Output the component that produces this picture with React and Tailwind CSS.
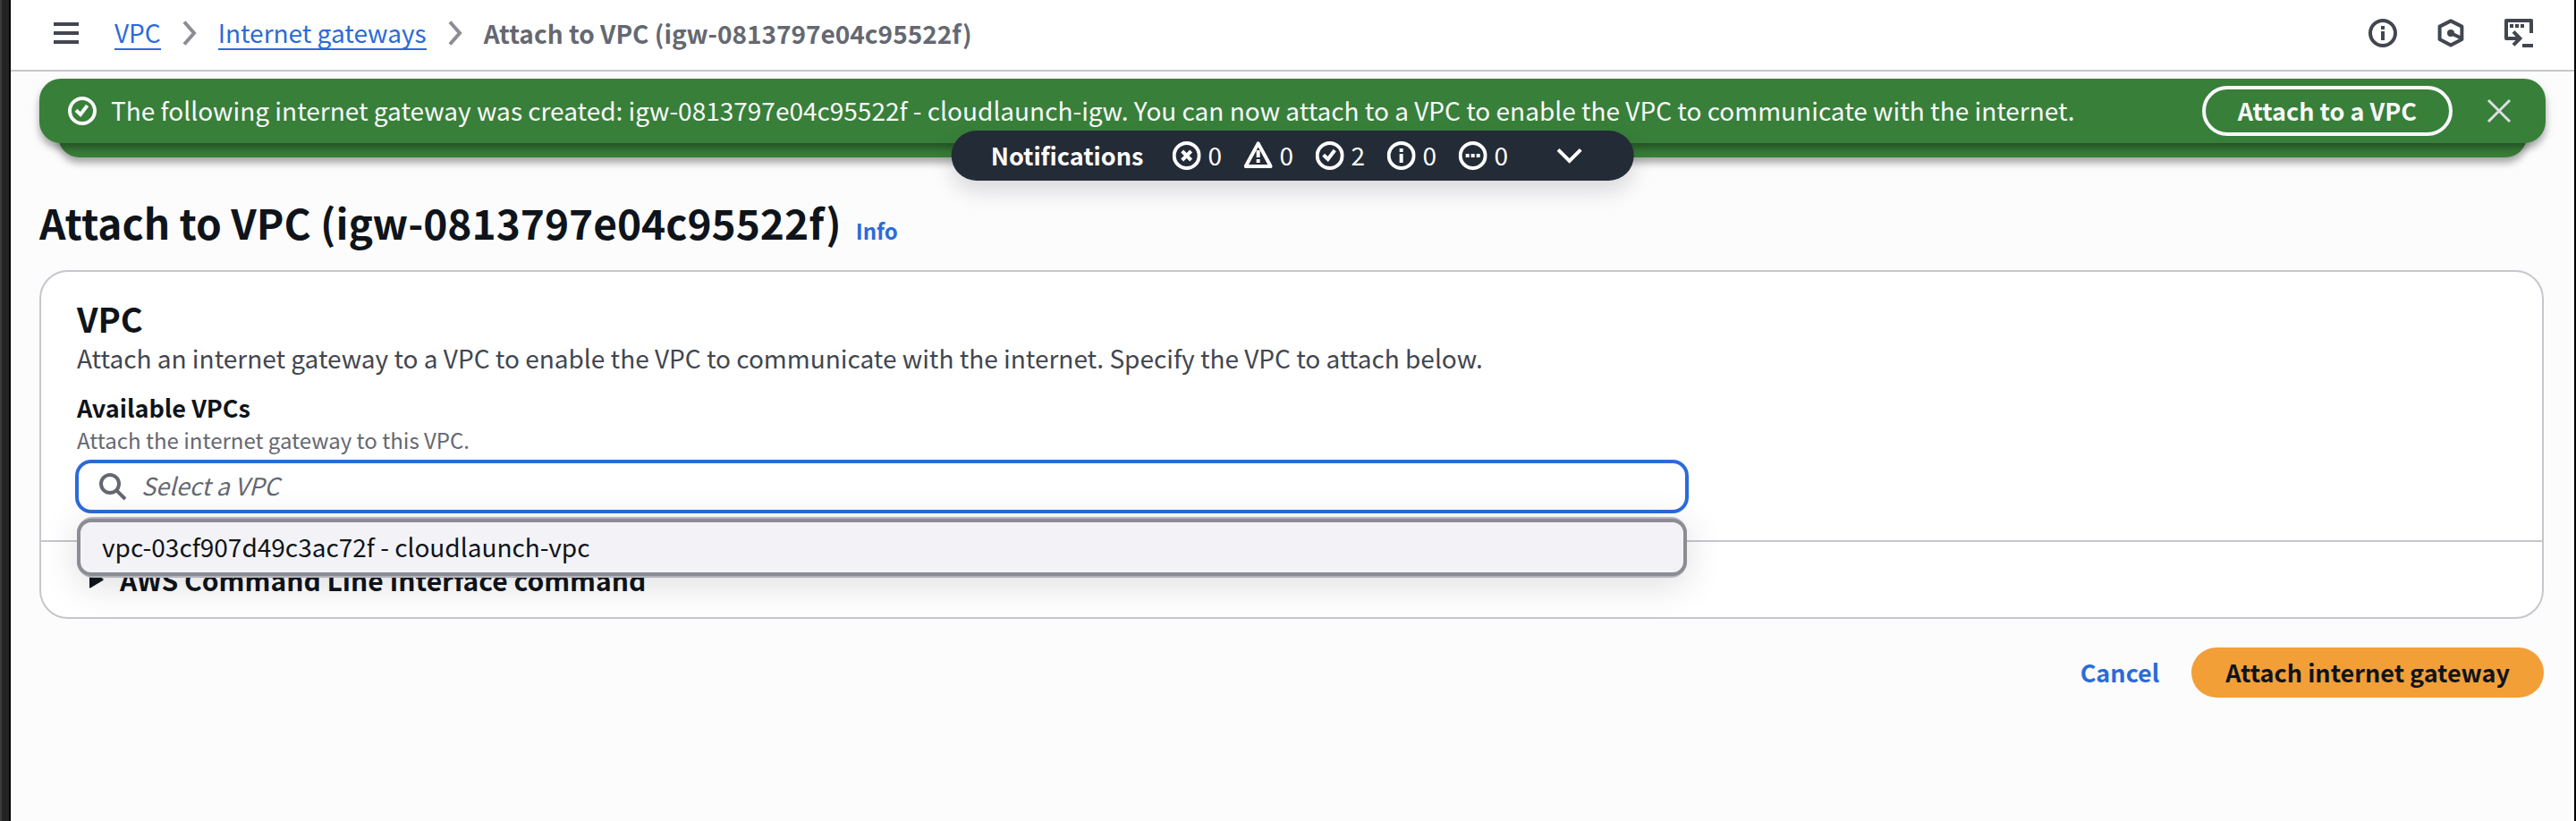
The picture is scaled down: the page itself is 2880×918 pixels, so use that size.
function Icon({ children, className = "size-8", strokeWidth = 2 }) {
  return (
    <svg
      viewBox="0 0 16 16"
      fill="none"
      stroke="currentColor"
      strokeWidth={strokeWidth}
      className={className + " shrink-0"}
      aria-hidden="true"
    >
      {children}
    </svg>
  );
}

function SuccessIcon() {
  return (
    <Icon>
      <circle cx="8" cy="8" r="7" />
      <path d="M4.5 7.6 7 10 10.800 5" />
    </Icon>
  );
}

function ErrorIcon() {
  return (
    <Icon>
      <circle cx="8" cy="8" r="7" />
      <path d="m5.500 5.500 5 5M10.500 5.500l-5 5" />
    </Icon>
  );
}

function WarningIcon() {
  return (
    <Icon>
      <path d="M8 1.2 15 14H1L8 1.2Z" strokeLinejoin="round" />
      <path d="M8 5v4M8 10v2" />
    </Icon>
  );
}

function InfoIcon() {
  return (
    <Icon>
      <circle cx="8" cy="8" r="7" />
      <path d="M8 7v5M8 4v2" />
    </Icon>
  );
}

function InProgressIcon() {
  return (
    <Icon>
      <circle cx="8" cy="8" r="7" />
      <path d="M4 8h2M7 8h2M10 8h2" />
    </Icon>
  );
}

function HexagonIcon() {
  return (
    <Icon>
      <path d="M8 1.2 14.2 4.3v7.2L8 14.8l-6.200-3.300V4.300L8 1.200Z" strokeLinejoin="round" />
      <circle cx="8" cy="8" r="2" fill="currentColor" stroke="none" />
      <path d="m8 8 6 2.900" />
    </Icon>
  );
}

function CloudShellIcon() {
  return (
    <Icon>
      <path d="M15 8V1H1v10h7.500" strokeLinejoin="round" />
      <path d="m5 7.200 3.700 3.800L5 14.700" />
      <path d="M3 4h2M6 4h2M9 4h2M10 15h6" />
    </Icon>
  );
}

function Separator() {
  return (
    <svg viewBox="0 0 16 28" fill="none" stroke="#8c8c94" strokeWidth="4" className="h-7 w-4 shrink-0" aria-hidden="true">
      <path d="M2 1.500 13 14 2 26.500" />
    </svg>
  );
}

const counts = [
  { label: "Errors", icon: ErrorIcon, value: 0 },
  { label: "Warnings", icon: WarningIcon, value: 0 },
  { label: "Successes", icon: SuccessIcon, value: 2 },
  { label: "Information", icon: InfoIcon, value: 0 },
  { label: "In progress", icon: InProgressIcon, value: 0 },
];

const tools = [
  { label: "Info panel", icon: InfoIcon },
  { label: "Diagnostics", icon: HexagonIcon },
  { label: "CloudShell", icon: CloudShellIcon },
];

function Header() {
  return (
    <header className="flex h-20 items-center border-b-2 border-[#c6c6cd] bg-white pb-1 pl-12 pr-[46px] text-[#424650]">
      <button type="button" aria-label="Open navigation" className="mr-10">
        <svg viewBox="0 0 28 24" fill="currentColor" className="h-6 w-7" aria-hidden="true">
          <path d="M0 0h28v4H0zM0 10h28v4H0zM0 20h28v4H0z" />
        </svg>
      </button>
      <nav aria-label="Breadcrumbs" className="flex items-center gap-6">
        <a href="#vpc" className="border-b-2 border-[#2b6bd9] leading-9 text-[#2b6bd9]">VPC</a>
        <Separator />
        <a href="#gateways" className="border-b-2 border-[#2b6bd9] leading-9 text-[#2b6bd9]">Internet gateways</a>
        <Separator />
        <span className="font-bold leading-9 text-[#656871]">Attach to VPC (igw-0813797e04c95522f)</span>
      </nav>
      <div className="ml-auto flex items-center gap-11">
        {tools.map(({ label, icon: Glyph }) => (
          <button key={label} type="button" aria-label={label}>
            <Glyph />
          </button>
        ))}
      </div>
    </header>
  );
}

function Notifications() {
  return (
    <section aria-label="Notifications" className="px-8 pt-2">
      <div className="relative">
        <div className="absolute inset-x-[21px] -bottom-4 top-4 rounded-3xl bg-[#387f39] shadow-[0_6px_8px_rgba(0,0,0,0.35)]" />
        <div className="relative flex h-[72px] items-center rounded-3xl bg-[#387f39] pl-8 pr-9 text-[#f9f9fb] shadow-[0_6px_8px_rgba(0,0,0,0.35)]">
          <SuccessIcon />
          <p className="flex-1 whitespace-nowrap pb-0.5 pl-4">
            The following internet gateway was created: igw-0813797e04c95522f - cloudlaunch-igw. You can now attach to a
            VPC to enable the VPC to communicate with the internet.
          </p>
          <button type="button" className="h-14 rounded-full border-4 border-[#f9f9fb] px-9 pb-0.5 text-[27px] font-bold leading-none">
            Attach to a VPC
          </button>
          <button type="button" aria-label="Dismiss" className="ml-9 text-[#dedee3]">
            <Icon strokeWidth={1.5}>
              <path d="m2 2 12 12M14 2 2 14" />
            </Icon>
          </button>
        </div>
        <button
          type="button"
          className="absolute left-1/2 top-[58px] flex h-14 -translate-x-1/2 items-center gap-6 rounded-full bg-[#232b37] pl-11 pr-14 text-white shadow-[0_12px_24px_rgba(0,7,22,0.14)]"
        >
          <span className="mr-2 pb-0.5 text-[27px] font-bold leading-none">Notifications</span>
          {counts.map(({ label, icon: Glyph, value }) => (
            <span key={label} title={label} className="flex items-center gap-2">
              <Glyph />
              <span className="w-4 pb-0.5 leading-none">{value}</span>
            </span>
          ))}
          <Icon className="ml-7 size-8">
            <path d="m1.700 4.700 6.300 6.300 6.300-6.300" />
          </Icon>
        </button>
      </div>
    </section>
  );
}

function VpcPicker() {
  return (
    <div className="grid grid-cols-3 gap-8">
      <div className="col-span-2">
        <label htmlFor="vpc" className="block text-[27px] font-bold leading-10 text-[#0f141a]">Available VPCs</label>
        <p id="vpc-hint" className="text-2xl leading-8 text-[#656871]">Attach the internet gateway to this VPC.</p>
        <div className="relative mt-2">
          <div className="flex h-14 items-center gap-4 rounded-2xl border-2 border-[#2b6bd9] bg-white px-[22px] text-[#656871] ring-2 ring-[#2b6bd9]">
            <Icon>
              <circle cx="6.500" cy="6.500" r="5" />
              <path d="m10.200 10.200 4.800 4.800" />
            </Icon>
            <input
              id="vpc"
              type="text"
              role="combobox"
              aria-expanded="true"
              aria-controls="vpc-options"
              aria-describedby="vpc-hint"
              placeholder="Select a VPC"
              className="min-w-0 flex-1 bg-transparent pb-0.5 text-[27px] leading-10 outline-none placeholder:italic placeholder:text-[#656871]"
            />
          </div>
          <div className="absolute inset-x-0 top-full mt-1.5 rounded-[18px] border-y-2 border-[#b4b4bb] bg-[#b4b4bb] shadow-[0_8px_40px_2px_rgba(0,7,22,0.12)]">
            <ul id="vpc-options" role="listbox" aria-label="Available VPCs">
              <li
                role="option"
                aria-selected="true"
                className="flex h-16 items-center rounded-2xl border-4 border-[#8c8c94] bg-[#f3f3f7] px-6 pb-0.5 text-[#0f141a]"
              >
                vpc-03cf907d49c3ac72f - cloudlaunch-vpc
              </li>
            </ul>
          </div>
        </div>
      </div>
    </div>
  );
}

export default function App() {
  return (
    <div className="flex min-h-screen bg-[#fcfcfd] font-['Noto_Sans_CJK_SC','Noto_Sans',sans-serif] text-[28px] leading-10 text-[#0f141a]">
      <div className="w-3 shrink-0 border-l-2 border-r-2 border-l-[#3a3a3a] border-r-black bg-[#232323]" />
      <div className="min-w-0 flex-1">
        <Header />
        <Notifications />
        <main className="pb-16 pl-8 pr-[34px] pt-[60px]">
          <div className="flex items-baseline gap-4">
            <h1 className="text-[46px] font-bold leading-[56px]">Attach to VPC (igw-0813797e04c95522f)</h1>
            <a href="#info" className="text-2xl font-bold leading-8 text-[#2b6bd9]">Info</a>
          </div>
          <section className="mt-[26px] rounded-[32px] border-2 border-[#c6c6cd] bg-white">
            <div className="px-10 py-7 pb-8">
              <h2 className="text-[38px] font-bold leading-[48px]">VPC</h2>
              <p className="mb-4 text-[#424650]">
                Attach an internet gateway to a VPC to enable the VPC to communicate with the internet. Specify the VPC to
                attach below.
              </p>
              <VpcPicker />
            </div>
            <div className="border-t-2 border-[#c6c6cd] py-[22px] pl-[54px]">
              <button type="button" aria-expanded="false" className="flex items-center gap-[18px] text-[30px] font-bold leading-10">
                <svg viewBox="0 0 16 20" fill="currentColor" className="h-5 w-4" aria-hidden="true">
                  <path d="M0 1.500Q0 0 1.400.800L15 9q1.300 1 0 2L1.400 19.200Q0 20 0 18.500Z" />
                </svg>
                AWS Command Line Interface command
              </button>
            </div>
          </section>
          <div className="mt-8 flex items-center justify-end gap-9">
            <button type="button" className="h-14 pb-0.5 text-[27px] font-bold leading-none text-[#2b6bd9]">Cancel</button>
            <button type="button" className="h-14 rounded-full bg-[#f29f38] px-[38px] pb-0.5 text-[27px] font-bold leading-none">
              Attach internet gateway
            </button>
          </div>
        </main>
      </div>
      <div className="w-0.5 shrink-0 bg-black" />
    </div>
  );
}
